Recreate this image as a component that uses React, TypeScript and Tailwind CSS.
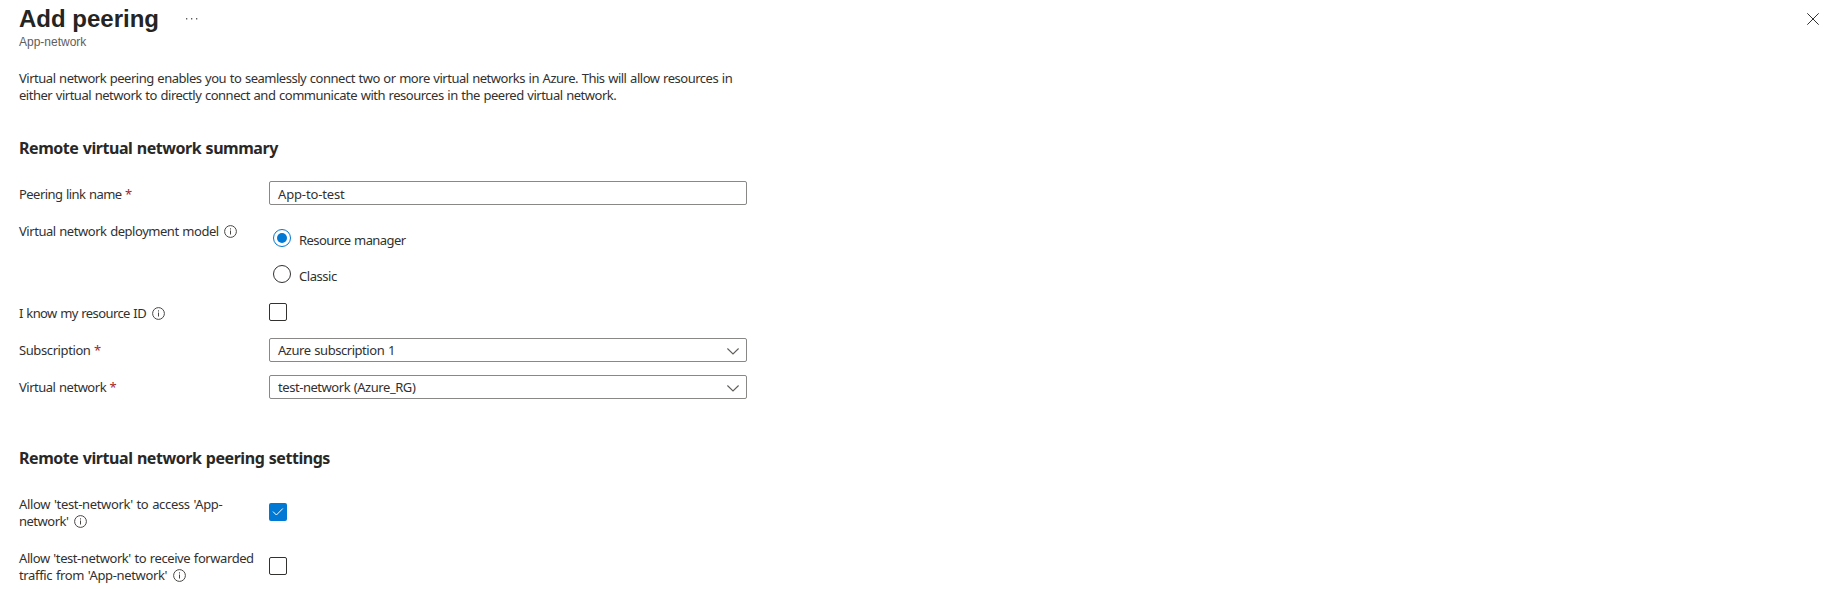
import React from "react";

function InfoIcon() {
  return (
    <svg className="ml-[5.5px] inline-block h-[13px] w-[13px] shrink-0 align-[-2px]" viewBox="0 0 13 13" fill="none" aria-hidden="true">
      <circle cx="6.5" cy="6.5" r="5.9" stroke="#484644" strokeWidth="1" />
      <path d="M6.5 5.5V9.5" stroke="#484644" strokeWidth="1" />
      <path d="M6.5 3.3V4.5" stroke="#484644" strokeWidth="1" />
    </svg>
  );
}

function Required() {
  return <span className="ml-[3.5px] text-[#a4262c]">*</span>;
}

function Label({ children }: { children: React.ReactNode }) {
  return <div className="w-[250px] shrink-0 whitespace-nowrap">{children}</div>;
}

function Chevron() {
  return (
    <svg className="mt-[6px] h-[7px] w-3" viewBox="0 0 12 7" fill="none" aria-hidden="true">
      <path d="M0.4 0.5L6 6L11.6 0.5" stroke="#605e5c" strokeWidth="1.1" />
    </svg>
  );
}

function Select({ children }: { children: React.ReactNode }) {
  return (
    <div className="flex h-6 w-[478px] items-start justify-between rounded-[2px] border border-[#8a8886] pt-[3px] pr-[7px] pl-2">
      {children}
      <Chevron />
    </div>
  );
}

function Checkbox({ checked = false }: { checked?: boolean }) {
  if (!checked) {
    return <div className="h-[18px] w-[18px] shrink-0 rounded-[2px] border border-[#323130]" />;
  }
  return (
    <div className="h-[18px] w-[18px] shrink-0 rounded-[2px] bg-[#0078d4]">
      <svg className="h-[18px] w-[18px]" viewBox="0 0 18 18" fill="none" aria-hidden="true">
        <path d="M4 8.6L7.4 12L13.8 5.5" stroke="#fff" strokeWidth="1" />
      </svg>
    </div>
  );
}

function Radio({ children, checked = false }: { children: React.ReactNode; checked?: boolean }) {
  return (
    <div className="flex h-9 items-start pl-1">
      {checked ? (
        <div className="flex h-[18px] w-[18px] items-center justify-center rounded-full border border-[#0078d4]">
          <div className="h-[10px] w-[10px] rounded-full bg-[#0078d4]" />
        </div>
      ) : (
        <div className="h-[18px] w-[18px] rounded-full border border-[#323130]" />
      )}
      <div className="mt-[3px] ml-2">{children}</div>
    </div>
  );
}

export default function App() {
  return (
    <main className="h-[589px] w-full overflow-hidden bg-white pl-[19px] font-['Noto_Sans',sans-serif] text-[13px] leading-[17px] text-[#323130] [word-spacing:0.7px]">
      <header className="flex h-[70px] items-start justify-between font-['Liberation_Sans',sans-serif] [word-spacing:normal]">
        <div>
          <div className="flex h-[34px] items-start pt-[5px]">
            <h1 className="text-[24px] leading-[28px] font-bold text-[#252423]">Add peering</h1>
            <svg className="mt-[13px] ml-[26.5px] h-[2px] w-3" viewBox="0 0 12 2" fill="#605e5c" aria-hidden="true">
              <path d="M0 0h1.3v1.4H0zM5 0h1.3v1.4H5zM10 0h1.3v1.4H10z" />
            </svg>
          </div>
          <p className="text-[12px] leading-[17px] text-[#605e5c]">App-network</p>
        </div>
        <svg className="mt-[13px] mr-4 h-3 w-3" viewBox="0 0 12 12" fill="none" aria-label="Close">
          <path d="M0.3 0.3L11.7 11.7M11.7 0.3L0.3 11.7" stroke="#323130" strokeWidth="1" />
        </svg>
      </header>

      <p className="h-[68px] w-[730px] tracking-[-0.486px] whitespace-nowrap">
        Virtual network peering enables you to seamlessly connect two or more virtual networks in Azure. This will allow resources in
        <br />
        either virtual network to directly connect and communicate with resources in the peered virtual network.
      </p>

      <section>
        <h2 className="h-[43px] text-[16px] leading-[20px] font-bold tracking-[-0.46px] text-[#292827]">Remote virtual network summary</h2>
        <div className="flex h-[42px]">
          <Label>
            <div className="mt-[5px]"><span className="tracking-[-0.55px]">Peering link name</span><Required /></div>
          </Label>
          <div className="h-6 w-[478px] rounded-[2px] border border-[#8a8886] px-2 pt-1 tracking-[-0.15px]">App-to-test</div>
        </div>
        <div className="flex h-20">
          <Label><span className="tracking-[-0.46px]">Virtual network deployment model</span><InfoIcon /></Label>
          <div className="pt-[6px]">
            <Radio checked><span className="tracking-[-0.58px]">Resource manager</span></Radio>
            <Radio><span className="tracking-[-0.45px]">Classic</span></Radio>
          </div>
        </div>
        <div className="flex h-[35px]">
          <Label>
            <div className="mt-[2px]"><span className="tracking-[-0.59px]">I know my resource ID</span><InfoIcon /></div>
          </Label>
          <Checkbox />
        </div>
        <div className="flex h-[37px]">
          <Label>
            <div className="mt-1"><span className="tracking-[-0.4px]">Subscription</span><Required /></div>
          </Label>
          <Select><span className="tracking-[-0.45px]">Azure subscription 1</span></Select>
        </div>
        <div className="flex h-[73px]">
          <Label>
            <div className="mt-1"><span className="tracking-[-0.49px]">Virtual network</span><Required /></div>
          </Label>
          <Select><span className="tracking-[-0.45px]">test-network (Azure_RG)</span></Select>
        </div>
      </section>

      <section>
        <h2 className="h-[47px] text-[16px] leading-[20px] font-bold tracking-[-0.45px] text-[#292827]">Remote virtual network peering settings</h2>
        <div className="flex h-[54px]">
          <Label>
            <div className="mt-px">
              <span className="tracking-[-0.33px]">Allow 'test-network' to access 'App-</span>
              <br />
              <span className="tracking-[-0.5px]">network'</span><InfoIcon />
            </div>
          </Label>
          <div className="pt-2"><Checkbox checked /></div>
        </div>
        <div className="flex h-[54px]">
          <Label>
            <div className="mt-px">
              <span className="tracking-[-0.425px]">Allow 'test-network' to receive forwarded</span>
              <br />
              <span className="tracking-[-0.35px]">traffic from 'App-network'</span><InfoIcon />
            </div>
          </Label>
          <div className="pt-2"><Checkbox /></div>
        </div>
      </section>
    </main>
  );
}
